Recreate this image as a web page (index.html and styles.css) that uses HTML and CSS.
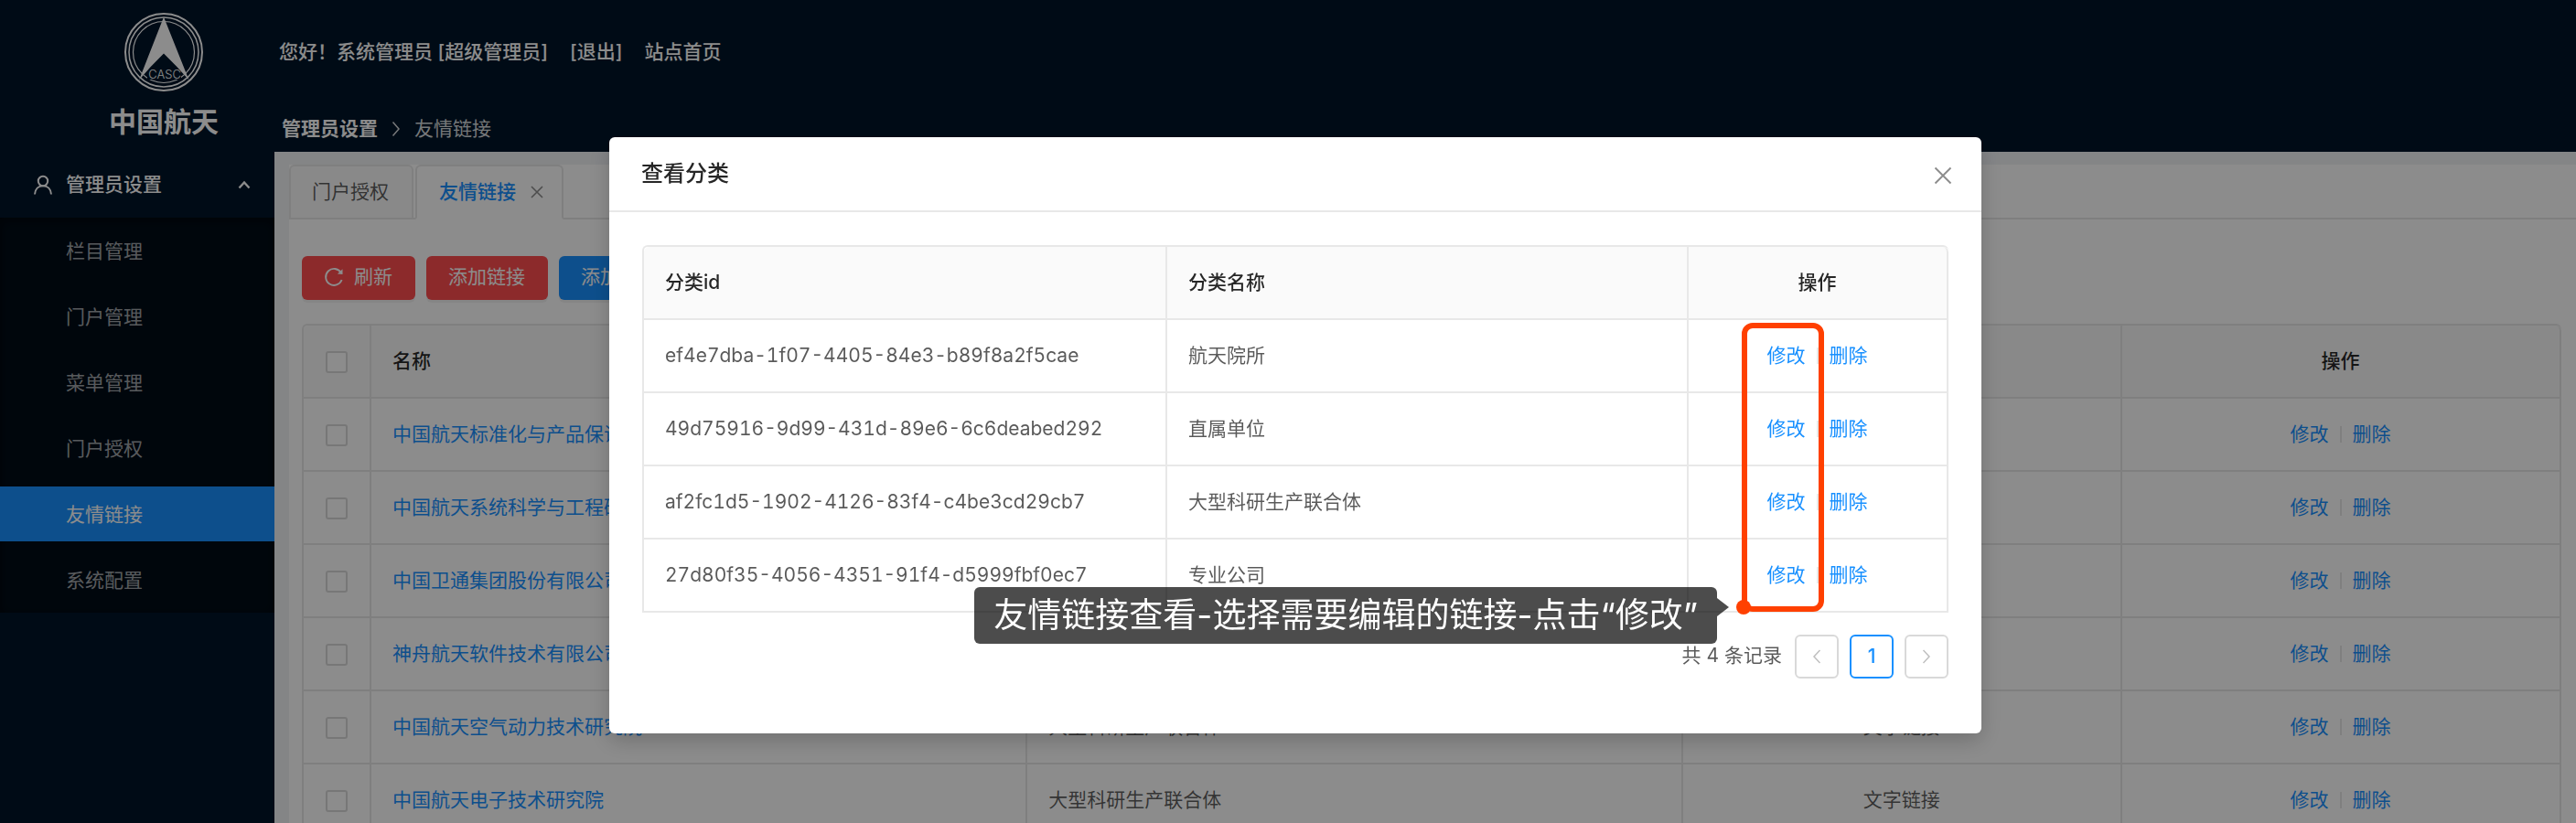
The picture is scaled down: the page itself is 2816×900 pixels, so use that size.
FILE: index.html
```html
<!DOCTYPE html>
<html lang="zh-CN">
<head>
<meta charset="utf-8">
<title>友情链接</title>
<link rel="stylesheet" href="styles.css">
</head>
<body>
<div class="shell">
  <aside class="sidebar">
    <div class="brand">
      <svg class="brand-logo" viewBox="0 0 88 88" aria-hidden="true">
        <g fill="none" stroke="#fff">
          <circle cx="44" cy="44" r="42" stroke-width="2"/>
          <circle cx="44" cy="44" r="38" stroke-width="1.5"/>
          <circle cx="44" cy="44" r="33.500" stroke-width="1.200"/>
        </g>
        <path d="M26 62h37v12H26z" fill="#001529"/>
        <path d="M44 5.500L71.500 74.500Q58 59 44 45.500Q30 59 17 74.500z" fill="#fff"/>
        <text class="brand-mark" x="45" y="73" text-anchor="middle">CASC</text>
      </svg>
      <strong class="brand-name">中国航天</strong>
    </div>
    <nav class="menu">
      <button class="menu-title" type="button">
        <svg class="icon-user" viewBox="0 0 22 22" aria-hidden="true"><g fill="none" stroke="currentColor" stroke-width="2"><circle cx="11" cy="7" r="5.200"/><path d="M2 21.500c.4-5.600 4-9.200 9-9.200s8.600 3.600 9 9.200"/></g></svg>
        <span>管理员设置</span>
        <svg class="icon-up" viewBox="0 0 14 10" aria-hidden="true"><path d="M1.500 8.500L7 2.500l5.500 6" fill="none" stroke="currentColor" stroke-width="2.400"/></svg>
      </button>
      <ul class="submenu">
        <li><a href="#">栏目管理</a></li>
        <li><a href="#">门户管理</a></li>
        <li><a href="#">菜单管理</a></li>
        <li><a href="#">门户授权</a></li>
        <li><a class="active" href="#">友情链接</a></li>
        <li><a href="#">系统配置</a></li>
      </ul>
    </nav>
  </aside>
  <div class="main">
    <header class="header">
      <div class="userbar">
        <span>您好！系统管理员 [超级管理员]</span>
        <a href="#">[退出]</a>
        <a href="#">站点首页</a>
      </div>
      <nav class="crumbs">
        <strong>管理员设置</strong>
        <svg class="icon-sep" viewBox="0 0 10 18" aria-hidden="true"><path d="M1.500 1.500L8 9l-6.500 7.500" fill="none" stroke="currentColor" stroke-width="1.500"/></svg>
        <span>友情链接</span>
      </nav>
    </header>
    <main class="content">
      <div class="panel">
        <div class="tabs">
          <a class="tab" href="#">门户授权</a>
          <div class="tab current"><a href="#">友情链接</a><button type="button" class="tab-close" aria-label="关闭"><svg viewBox="0 0 14 14" aria-hidden="true"><path d="M1 1l12 12M13 1L1 13" fill="none" stroke="currentColor" stroke-width="1.600"/></svg></button></div>
        </div>
        <div class="body">
          <div class="toolbar">
            <button class="btn danger" type="button"><svg class="icon-reload" viewBox="0 0 22 22" aria-hidden="true"><path d="M18.800 6.200A9 9 0 1 0 19.600 14" fill="none" stroke="currentColor" stroke-width="1.900"/><path d="M20.500 2.200v5.800l-5.600-.6z" fill="currentColor"/></svg><span>刷新</span></button>
            <button class="btn danger" type="button">添加链接</button>
            <button class="btn primary" type="button">添加分类</button>
          </div>
          <table class="grid links">
            <colgroup><col class="c-check"><col class="c-wide"><col class="c-wide"><col class="c-third"><col class="c-third"></colgroup>
            <thead>
              <tr><th class="mid"><input type="checkbox" aria-label="全选"></th><th>名称</th><th>分类</th><th class="mid">类型</th><th class="mid">操作</th></tr>
            </thead>
            <tbody>
              <tr><td class="mid"><input type="checkbox" aria-label="选择"></td><td><a href="#">中国航天标准化与产品保证研究院</a></td><td>航天院所</td><td class="mid">文字链接</td><td class="mid"><a href="#">修改</a><i class="bar"></i><a href="#">删除</a></td></tr>
              <tr><td class="mid"><input type="checkbox" aria-label="选择"></td><td><a href="#">中国航天系统科学与工程研究院</a></td><td>航天院所</td><td class="mid">文字链接</td><td class="mid"><a href="#">修改</a><i class="bar"></i><a href="#">删除</a></td></tr>
              <tr><td class="mid"><input type="checkbox" aria-label="选择"></td><td><a href="#">中国卫通集团股份有限公司</a></td><td>专业公司</td><td class="mid">文字链接</td><td class="mid"><a href="#">修改</a><i class="bar"></i><a href="#">删除</a></td></tr>
              <tr><td class="mid"><input type="checkbox" aria-label="选择"></td><td><a href="#">神舟航天软件技术有限公司</a></td><td>专业公司</td><td class="mid">文字链接</td><td class="mid"><a href="#">修改</a><i class="bar"></i><a href="#">删除</a></td></tr>
              <tr><td class="mid"><input type="checkbox" aria-label="选择"></td><td><a href="#">中国航天空气动力技术研究院</a></td><td>大型科研生产联合体</td><td class="mid">文字链接</td><td class="mid"><a href="#">修改</a><i class="bar"></i><a href="#">删除</a></td></tr>
              <tr><td class="mid"><input type="checkbox" aria-label="选择"></td><td><a href="#">中国航天电子技术研究院</a></td><td>大型科研生产联合体</td><td class="mid">文字链接</td><td class="mid"><a href="#">修改</a><i class="bar"></i><a href="#">删除</a></td></tr>
            </tbody>
          </table>
        </div>
      </div>
    </main>
  </div>
</div>

<div class="mask">
  <section class="modal" role="dialog" aria-labelledby="modal-title">
    <header class="modal-head">
      <h2 id="modal-title">查看分类</h2>
      <button class="modal-close" type="button" aria-label="关闭"><svg viewBox="0 0 20 20" aria-hidden="true"><path d="M1.500 1.500l17 17M18.500 1.500l-17 17" fill="none" stroke="currentColor" stroke-width="1.900"/></svg></button>
    </header>
    <div class="modal-body">
      <table class="grid">
        <colgroup><col class="m-id"><col class="m-name"><col class="m-act"></colgroup>
        <thead><tr><th>分类id</th><th>分类名称</th><th class="mid">操作</th></tr></thead>
        <tbody>
          <tr><td>ef4e7dba-1f07-4405-84e3-b89f8a2f5cae</td><td>航天院所</td><td class="mid"><a href="#">修改</a><i class="bar"></i><a href="#">删除</a></td></tr>
          <tr><td>49d75916-9d99-431d-89e6-6c6deabed292</td><td>直属单位</td><td class="mid"><a href="#">修改</a><i class="bar"></i><a href="#">删除</a></td></tr>
          <tr><td>af2fc1d5-1902-4126-83f4-c4be3cd29cb7</td><td>大型科研生产联合体</td><td class="mid"><a href="#">修改</a><i class="bar"></i><a href="#">删除</a></td></tr>
          <tr><td>27d80f35-4056-4351-91f4-d5999fbf0ec7</td><td>专业公司</td><td class="mid"><a href="#">修改</a><i class="bar"></i><a href="#">删除</a></td></tr>
        </tbody>
      </table>
      <div class="pager">
        <span class="pager-total">共 4 条记录</span>
        <button type="button" disabled aria-label="上一页"><svg viewBox="0 0 10 18" aria-hidden="true"><path d="M8.500 2L2 9l6.500 7" fill="none" stroke="currentColor" stroke-width="1.500"/></svg></button>
        <button type="button" class="on">1</button>
        <button type="button" disabled aria-label="下一页"><svg viewBox="0 0 10 18" aria-hidden="true"><path d="M1.500 2L8 9l-6.500 7" fill="none" stroke="currentColor" stroke-width="1.500"/></svg></button>
      </div>
    </div>
    <div class="focus-frame"></div>
    <div class="callout">友情链接查看-选择需要编辑的链接-点击“修改”</div>
  </section>
</div>
</body>
</html>
```

FILE: styles.css
```css
* { box-sizing: border-box; }

body {
  margin: 0;
  background: #f0f2f5;
  color: rgba(0, 0, 0, .65);
  font-family: Inter, "Noto Sans CJK SC", sans-serif;
  font-size: 21px;
  line-height: 32px;
}

a { color: #1890ff; text-decoration: none; }
button { font: inherit; color: inherit; padding: 0; border: 0; background: none; }
svg { display: block; flex: none; }

.shell { display: flex; height: 100vh; overflow: hidden; }

/* Sidebar */
.sidebar { flex: none; width: 300px; background: #001529; color: #fff; }
.brand { display: flex; flex-direction: column; align-items: center; height: 166px; padding: 13px 0 0 58px; gap: 10px; }
.brand-logo { width: 88px; height: 88px; }
.brand-mark { fill: #fff; font: 300 13px Inter, sans-serif; }
.brand-name { font-size: 30px; line-height: 44px; }
.menu-title { display: flex; align-items: center; width: 100%; height: 60px; margin: 6px 0; padding: 0 26px 0 36px; gap: 14px; font-weight: 500; }
.icon-user { width: 22px; height: 22px; }
.icon-up { width: 14px; height: 10px; margin-left: auto; }
.submenu { margin: 0; padding: 6px 0; list-style: none; display: grid; gap: 12px; background: #000c17; box-shadow: inset 0 3px 12px rgba(0, 0, 0, .45); }
.submenu a { display: block; height: 60px; padding-left: 72px; line-height: 61px; color: rgba(255, 255, 255, .65); }
.submenu .active { background: #1890ff; color: #fff; }

/* Header */
.main { flex: 1; min-width: 0; }
.header { height: 166px; background: #001529; color: #fff; display: flex; flex-direction: column; padding: 41px 0 0 5px; gap: 52px; }
.userbar { display: flex; gap: 24px; font-weight: 500; }
.userbar a { color: inherit; }
.crumbs { display: flex; align-items: center; gap: 15px; padding-left: 3px; color: rgba(255, 255, 255, .85); }
.crumbs strong { color: #fff; }
.icon-sep { width: 10px; height: 18px; }

/* Content */
.content { padding: 14px 0 0 16px; }
.panel { background: #fff; }
.tabs { display: flex; gap: 2px; height: 60px; border-bottom: 2px solid #e8e8e8; }
.tab { display: flex; align-items: center; gap: 16px; height: 60px; padding: 0 25px 0 23px; border: 2px solid #e8e8e8; border-radius: 6px 6px 0 0; background: #fafafa; color: rgba(0, 0, 0, .65); }
.tab.current { padding: 0 20px 0 24px; background: #fff; border-bottom-color: #fff; font-weight: 500; }
.tab-close { color: rgba(0, 0, 0, .45); }
.tab-close svg { width: 14px; height: 14px; }
.body { padding: 40px 16px 16px 14px; }
.toolbar { display: flex; gap: 12px; margin-bottom: 26px; }
.btn { display: flex; align-items: center; gap: 11px; height: 48px; padding: 0 25px 2px 24px; border-radius: 6px; color: #fff; box-shadow: 0 3px 0 rgba(0, 0, 0, .05); }
.danger { background: #ff4d4f; }
.primary { background: #1890ff; }
.icon-reload { width: 22px; height: 22px; }

/* Tables */
.grid { width: 100%; table-layout: fixed; border-collapse: separate; border-spacing: 0; border: solid #e8e8e8; border-width: 2px 0 0 2px; border-radius: 6px 6px 0 0; }
.grid th, .grid td { height: 80px; padding: 0 24px 0 23px; border: solid #e8e8e8; border-width: 0 2px 2px 0; text-align: left; white-space: nowrap; }
.grid th { background: #fafafa; color: rgba(0, 0, 0, .85); font-weight: 500; }
.grid td { font-feature-settings: "tnum"; }
.grid th:first-child { border-top-left-radius: 6px; }
.grid th:last-child { border-top-right-radius: 6px; }
.grid .mid { text-align: center; }
.grid.links th:first-child, .grid.links td:first-child { padding: 2px 0 0; }
.links input { appearance: none; display: block; width: 24px; height: 24px; margin: 0 auto; border: 2px solid #d9d9d9; border-radius: 3px; background: #fff; }
.bar { display: inline-block; width: 2px; height: 18px; margin: 0 12px; vertical-align: -2px; background: #e8e8e8; }
.c-check { width: 74px; }
.c-wide { width: 29.9%; }
.c-third { width: 20%; }
.m-id { width: 572px; }
.m-act { width: 284px; }

/* Dialog */
.mask { position: fixed; inset: 0; display: flex; justify-content: center; align-items: flex-start; padding: 150px 0 0 16px; background: rgba(0, 0, 0, .45); }
.modal { position: relative; width: 1500px; max-width: 100%; border-radius: 6px; background: #fff; box-shadow: 0 8px 24px rgba(0, 0, 0, .2); }
.modal-head { display: flex; justify-content: space-between; align-items: center; height: 82px; padding: 0 32px 0 35px; border-bottom: 2px solid #e8e8e8; }
.modal-head h2 { margin: 0; font-size: 24px; font-weight: 500; line-height: 36px; color: rgba(0, 0, 0, .85); }
.modal-close { padding-top: 4px; color: rgba(0, 0, 0, .45); }
.modal-close svg { width: 20px; height: 20px; }
.modal-body { padding: 36px 36px 60px; }
.pager { display: flex; justify-content: flex-end; gap: 12px; margin-top: 24px; }
.pager-total { margin-right: 2px; line-height: 46px; }
.pager button { display: grid; place-items: center; width: 48px; height: 48px; border: 2px solid #d9d9d9; border-radius: 6px; color: rgba(0, 0, 0, .25); }
.pager .on { border-color: #1890ff; color: #1890ff; font-weight: 500; }
.pager svg { width: 10px; height: 18px; }

/* Guide marks over the dialog */
.focus-frame { position: absolute; top: 203px; right: 172px; width: 90px; height: 316px; border: 6px solid #ff4000; border-radius: 12px; }
.focus-frame::after { content: ""; position: absolute; left: -12px; bottom: -9px; width: 16px; height: 16px; border-radius: 50%; background: #ff4000; }
.callout { position: absolute; top: 492px; right: 289px; padding: 4px 21px; border-radius: 6px; background: rgba(0, 0, 0, .7); color: #fff; font-size: 37px; line-height: 54px; white-space: nowrap; }
.callout::after { content: ""; position: absolute; left: 100%; top: 12px; border: solid transparent; border-width: 10px 0 10px 13px; border-left-color: rgba(0, 0, 0, .7); }
```
